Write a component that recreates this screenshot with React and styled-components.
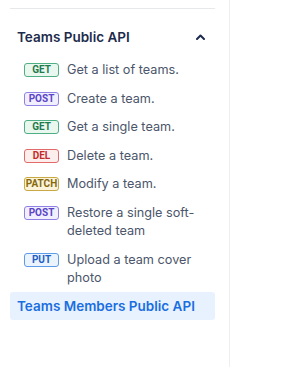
import React from "react";
import styled, { createGlobalStyle } from "styled-components";

const GlobalStyle = createGlobalStyle`
  html, body {
    margin: 0;
    padding: 0;
    background: #ffffff;
  }
  body {
    font-family: Inter, "Noto Sans", "Liberation Sans", sans-serif;
    -webkit-font-smoothing: antialiased;
  }
`;

const methods = {
  GET: { border: "#4fae83", bg: "#e9f7ef", color: "#1f7a4d" },
  POST: { border: "#8f82e3", bg: "#f1effd", color: "#5a45c8" },
  DEL: { border: "#e26a6a", bg: "#fdeeee", color: "#c42b2b" },
  PATCH: { border: "#c9a944", bg: "#fbf4da", color: "#86690f" },
  PUT: { border: "#5e9ce8", bg: "#ebf3fd", color: "#1f5fc4" },
};

const endpoints = [
  { method: "GET", label: "Get a list of teams." },
  { method: "POST", label: "Create a team." },
  { method: "GET", label: "Get a single team." },
  { method: "DEL", label: "Delete a team." },
  { method: "PATCH", label: "Modify a team." },
  { method: "POST", label: "Restore a single soft-deleted team" },
  { method: "PUT", label: "Upload a team cover photo" },
];

function App() {
  return (
    <>
      <GlobalStyle />
      <Page>
        <Sidebar>
          <Divider />
          <Group>
            <GroupHeader>
              <span>Teams Public API</span>
              <svg width="9" height="6" viewBox="0 0 9 6" fill="none">
                <path
                  d="M1 5L4.5 1.5L8 5"
                  stroke="#1d2b4c"
                  strokeWidth="2"
                  strokeLinecap="round"
                  strokeLinejoin="round"
                />
              </svg>
            </GroupHeader>
            <List>
              {endpoints.map((e, i) => (
                <Item key={i}>
                  <Badge $m={methods[e.method]}>{e.method}</Badge>
                  <Label>{e.label}</Label>
                </Item>
              ))}
            </List>
            <ActiveGroup>Teams Members Public API</ActiveGroup>
          </Group>
        </Sidebar>
        <Main />
      </Page>
    </>
  );
}

const Page = styled.div`
  display: flex;
  height: 367px;
  width: 295px;
  overflow: hidden;
`;

const Sidebar = styled.aside`
  width: 230px;
  box-sizing: border-box;
  border-right: 1px solid #eceef2;
  padding: 8px 14px 0 10px;
`;

const Main = styled.main`
  flex: 1;
  background: #ffffff;
`;

const Divider = styled.div`
  height: 1px;
  background: #e6e8ec;
`;

const Group = styled.div`
  display: flex;
  flex-direction: column;
  padding-top: 18px;
`;

const GroupHeader = styled.div`
  display: flex;
  align-items: center;
  justify-content: space-between;
  height: 20px;
  padding: 0 10px 0 7px;
  font-size: 13.5px;
  font-weight: 600;
  color: #1d2b4c;
`;

const List = styled.ul`
  list-style: none;
  margin: 0;
  padding: 9px 0 0 14px;
`;

const Item = styled.li`
  display: flex;
  align-items: flex-start;
  gap: 8px;
  padding: 5px 0;
  line-height: 18.5px;
`;

const Badge = styled.span`
  flex: none;
  box-sizing: border-box;
  width: 35px;
  height: 14px;
  margin-top: 2.25px;
  display: flex;
  align-items: center;
  justify-content: center;
  border: 1px solid ${({ $m }) => $m.border};
  border-radius: 3px;
  background: ${({ $m }) => $m.bg};
  color: ${({ $m }) => $m.color};
  font-family: Roboto, "Liberation Sans", sans-serif;
  font-size: 10px;
  font-weight: 700;
  line-height: 1;
`;

const Label = styled.span`
  font-size: 12.7px;
  color: #4c566b;
`;

const ActiveGroup = styled.div`
  margin-top: -1px;
  height: 28px;
  display: flex;
  align-items: center;
  padding: 0 7px;
  border-radius: 3px;
  background: #e8f2fe;
  color: #1a6ee0;
  font-size: 13.5px;
  font-weight: 600;
`;

export default App;
